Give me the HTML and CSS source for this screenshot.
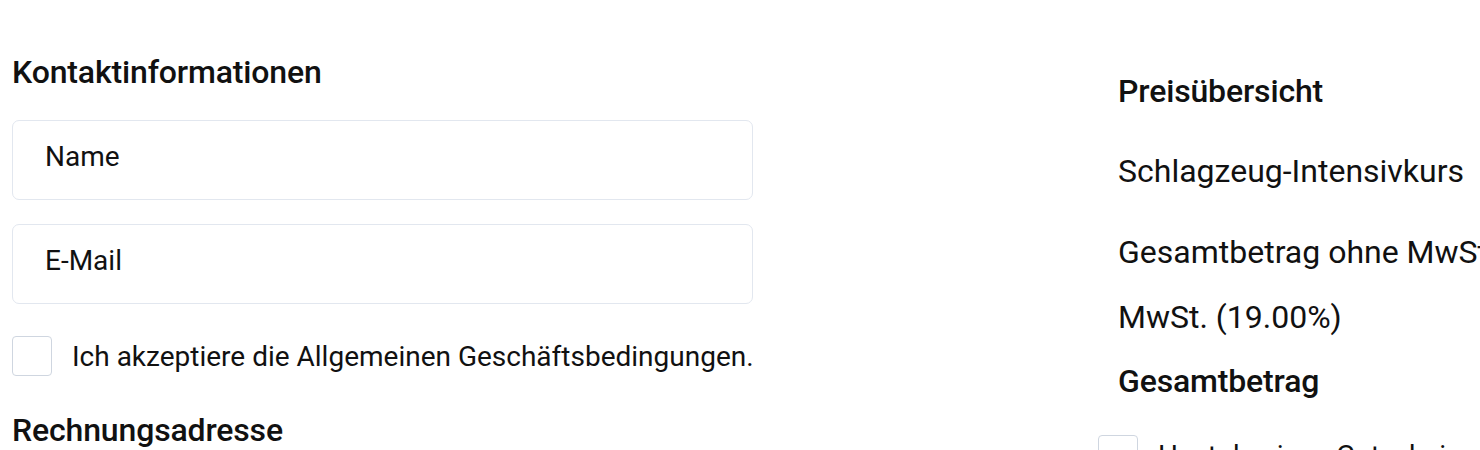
FILE: index.html
```html
<!DOCTYPE html>
<html lang="de">
<head>
<meta charset="utf-8">
<title>Checkout</title>
<link rel="stylesheet" href="styles.css">
</head>
<body>
<div class="page">
  <main class="form-col">
    <h2 class="section-title first">Kontaktinformationen</h2>
    <div class="field">Name</div>
    <div class="field">E-Mail</div>
    <label class="check-row">
      <span class="box"></span>
      <span class="check-label">Ich akzeptiere die Allgemeinen Geschäftsbedingungen.</span>
    </label>
    <h2 class="section-title last">Rechnungsadresse</h2>
  </main>
  <aside class="summary">
    <h2 class="summary-title">Preisübersicht</h2>
    <div class="line">Schlagzeug-Intensivkurs</div>
    <div class="line">Gesamtbetrag ohne MwSt.</div>
    <div class="line small">MwSt. (19.00%)</div>
    <div class="line total">Gesamtbetrag</div>
    <label class="check-row voucher">
      <span class="box"></span>
      <span class="check-label">Hast du einen Gutscheincode?</span>
    </label>
  </aside>
</div>
</body>
</html>
```

FILE: styles.css
```css
html, body {
  margin: 0;
  padding: 0;
  background: #ffffff;
  overflow: hidden;
}
body {
  font-family: Roboto, "Liberation Sans", sans-serif;
  color: #111111;
}
.page {
  display: flex;
  align-items: flex-start;
  padding-left: 12px;
  width: 2000px;
}
.form-col {
  width: 741px;
  display: flex;
  flex-direction: column;
}
.section-title {
  margin: 0;
  font-size: 32px;
  font-weight: 500;
  line-height: 40px;
  letter-spacing: -0.15px;
}
.section-title.first {
  margin-top: 52px;
  margin-bottom: 28px;
}
.section-title.last {
  margin-top: 34px;
}
.field {
  border: 1px solid #e2e7ef;
  border-radius: 7px;
  box-sizing: border-box;
  height: 80px;
  display: flex;
  align-items: center;
  padding: 0 0 7px 32px;
  font-size: 28px;
  margin-bottom: 24px;
}
.check-row {
  display: flex;
  align-items: center;
  gap: 20px;
  margin-top: 8px;
}
.box {
  width: 38px;
  height: 38px;
  border: 1px solid #cfd6e0;
  border-radius: 4px;
  flex: none;
}
.check-label {
  font-size: 28px;
  white-space: nowrap;
}
.summary {
  margin-left: 345px;
  display: flex;
  flex-direction: column;
  width: 600px;
}
.summary-title {
  margin: 71px 0 0 20px;
  font-size: 32px;
  font-weight: 500;
  line-height: 40px;
  letter-spacing: -0.15px;
}
.line {
  margin-left: 20px;
  font-size: 32px;
  line-height: 40px;
  margin-top: 40px;
  white-space: nowrap;
}
.line + .line {
  margin-top: 41px;
}
.line.small {
  margin-top: 25px;
}
.line.total {
  font-weight: 500;
  margin-top: 24px;
  letter-spacing: -0.15px;
}
.voucher {
  margin-top: 34px;
}
```
